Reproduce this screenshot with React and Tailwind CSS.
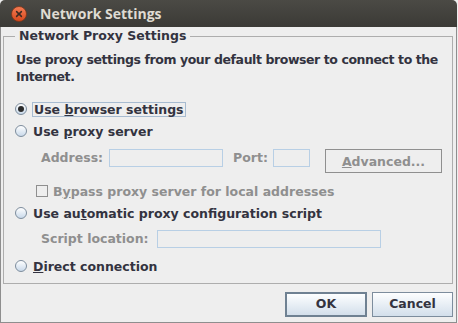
function CloseButton() {
  return (
    <svg width="16" height="16" viewBox="0 0 16 16" className="shrink-0">
      <defs>
        <linearGradient id="cb" x1="0" y1="0" x2="0" y2="1">
          <stop offset="0" stopColor="#f47d55" />
          <stop offset="1" stopColor="#d5471c" />
        </linearGradient>
      </defs>
      <circle cx="8" cy="8" r="7.5" fill="url(#cb)" stroke="#7a3519" strokeWidth="0.8" />
      <path d="M5.6 5.6 L10.4 10.4 M10.4 5.6 L5.6 10.4" stroke="#3b2a22" strokeWidth="1.5" strokeLinecap="round" />
    </svg>
  )
}

function Radio({ checked }) {
  return (
    <span className="relative flex h-[12px] w-[12px] shrink-0 items-center justify-center rounded-full border border-[#7d8d9d] bg-gradient-to-b from-[#ffffff] to-[#c9d9ea]">
      {checked && <span className="h-[6px] w-[6px] rounded-full bg-[#2b2b2b]" />}
    </span>
  )
}

function RadioRow({ checked, children, focus, className = '' }) {
  return (
    <div className={`flex h-[22px] items-center ${className}`}>
      <Radio checked={checked} />
      {focus ? (
        <span className="ml-[5px] border border-[#a7bbd0] px-px leading-[13px]">{children}</span>
      ) : (
        <span className="ml-[6px] leading-[17px]">{children}</span>
      )}
    </div>
  )
}

function Field({ className = '' }) {
  return <span className={`block h-[18px] border border-[#b8cfe5] bg-[#eeeeee] ${className}`} />
}

export default function App() {
  return (
    <div className="h-[323px] w-[458px] overflow-hidden bg-[#eeeeee] font-['DejaVu_Sans',sans-serif] text-[12.5px] font-bold text-[#333340]">
      <div className="flex h-[27px] w-[457px] items-center rounded-t-[5px] bg-gradient-to-b from-[#4b4a45] to-[#3b3a36] pl-[11px]">
        <CloseButton />
        <span className="ml-[13px] font-['Open_Sans',sans-serif] text-[14px] font-bold leading-[27px] text-[#dfdbd2]">
          Network Settings
        </span>
      </div>

      <div className="h-[296px] w-[457px] border-x border-b border-[#8e8e8e] pl-[2px] pr-[3px]">
        <fieldset className="border border-[#adadad] pb-[6px] pl-[11px] pr-[8px] pt-[6px]">
          <legend className="px-[4px] leading-[18px]">Network Proxy Settings</legend>

          <p className="ml-px whitespace-nowrap leading-[17px] tracking-[-0.42px]">
            Use proxy settings from your default browser to connect to the
            <br />
            Internet.
          </p>

          <RadioRow checked focus className="mt-[13px]">
            Use <u>b</u>rowser settings
          </RadioRow>
          <RadioRow>
            Use <u>p</u>roxy server
          </RadioRow>

          <div className="mt-[7px] flex h-[24px] items-start text-[#8f8f8f]">
            <span className="ml-[26px] w-[68px] leading-[18px]">Address:</span>
            <Field className="w-[114px]" />
            <span className="ml-[10px] w-[40px] leading-[18px]">Port:</span>
            <Field className="w-[37px]" />
            <span className="ml-[15px] flex h-[24px] w-[117px] items-center justify-center border border-[#8f8f8f] leading-[17px]">
              <span>
                <u>A</u>dvanced...
              </span>
            </span>
          </div>

          <div className="mt-[7px] flex h-[22px] items-center text-[#8f8f8f]">
            <span className="ml-[21px] h-[12px] w-[12px] shrink-0 border border-[#8f8f8f]" />
            <span className="ml-[5px] leading-[17px]">
              B<u>y</u>pass proxy server for local addresses
            </span>
          </div>

          <RadioRow>
            Use au<u>t</u>omatic proxy configuration script
          </RadioRow>

          <div className="mt-[6px] flex h-[18px] items-center text-[#8f8f8f]">
            <span className="ml-[26px] w-[116px] leading-[18px]">Script location:</span>
            <Field className="w-[224px]" />
          </div>

          <RadioRow className="mt-[7px]">
            <u>D</u>irect connection
          </RadioRow>
        </fieldset>

        <div className="mt-[8px] flex justify-end gap-[5px]">
          <button
            type="button"
            className="flex h-[25px] w-[82px] items-center justify-center border-2 border-[#6f8192] bg-gradient-to-b from-[#fdfeff] to-[#d3dfeb] text-[12.5px] font-bold text-[#333340]"
          >
            OK
          </button>
          <button
            type="button"
            className="flex h-[25px] w-[81px] items-center justify-center border border-[#7d8d9d] bg-gradient-to-b from-[#fdfeff] to-[#d3dfeb] text-[12.5px] font-bold text-[#333340]"
          >
            Cancel
          </button>
        </div>
      </div>
    </div>
  )
}
